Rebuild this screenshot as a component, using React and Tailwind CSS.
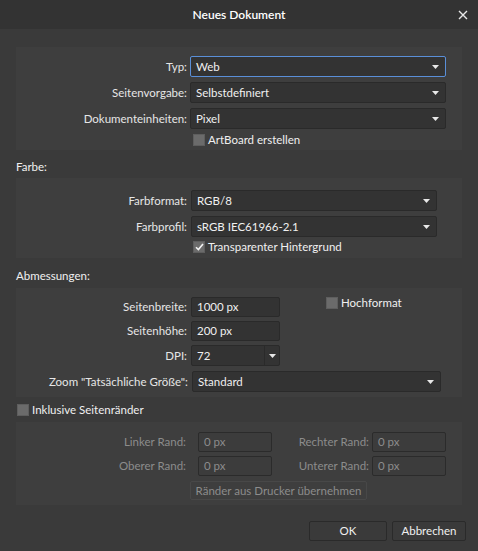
import React from 'react';

const font = { fontFamily: 'Lato, "Liberation Sans", sans-serif' };

function Arrow() {
  return (
    <svg width="7" height="4" viewBox="0 0 7 4" className="shrink-0">
      <path d="M0 0 H7 L3.5 4 Z" fill="#e8e8e8" />
    </svg>
  );
}

function Select({ value, width, focused }) {
  return (
    <div
      className={`flex items-center justify-between h-[21px] pl-[5px] pr-[6px] rounded-[2px] bg-[#333333] border ${
        focused ? 'border-[#5a8fd8]' : 'border-[#2a2a2a]'
      } ${width}`}
    >
      <span className="text-[#f0f0f0]">{value}</span>
      <Arrow />
    </div>
  );
}

function Input({ value, disabled, width = 'w-[89px]' }) {
  return (
    <div
      className={`flex items-center h-[20px] pl-[5px] rounded-[2px] border ${width} ${
        disabled ? 'bg-[#3c3c3c] border-[#2b2b2b] text-[#8c8c8c]' : 'bg-[#333333] border-[#2a2a2a] text-[#f0f0f0]'
      }`}
    >
      {value}
    </div>
  );
}

function Check({ label, checked }) {
  return (
    <div className="flex items-center gap-[3px] h-[12px]">
      <div className="w-[12px] h-[12px] bg-[#6b6b6b] border border-[#5e5e5e] flex items-center justify-center">
        {checked && (
          <svg width="9" height="8" viewBox="0 0 9 8">
            <path d="M1 4.2 L3.4 6.6 L8 1" stroke="#f2f2f2" strokeWidth="1.6" fill="none" />
          </svg>
        )}
      </div>
      <span className="text-[#f0f0f0]">{label}</span>
    </div>
  );
}

function Label({ children, width = 'w-[171px]', disabled }) {
  return (
    <div className={`${width} shrink-0 text-right whitespace-nowrap ${disabled ? 'text-[#8c8c8c]' : 'text-[#e6e6e6]'}`}>
      {children}
    </div>
  );
}

function Panel({ className, children }) {
  return <div className={`mx-4 bg-[#3e3e3e] flex flex-col ${className}`}>{children}</div>;
}

function Heading({ children, className }) {
  return <div className={`${className} px-4 text-[#f0f0f0]`}>{children}</div>;
}

export default function App() {
  return (
    <div className="w-[478px] h-[551px] bg-[#3a3a3a] flex flex-col text-[11.5px] leading-[14px] overflow-hidden" style={font}>
      <div className="h-[29px] bg-[#333333] relative flex items-center justify-center shrink-0">
        <span className="text-white text-[12px] font-semibold">Neues Dokument</span>
        <svg width="10" height="10" viewBox="0 0 10 10" className="absolute right-[10px] top-[10px]">
          <path d="M1 1 L9 9 M9 1 L1 9" stroke="#e8e8e8" strokeWidth="1.4" />
        </svg>
      </div>

      <Panel className="mt-[18px] pt-[9px] pb-[4px] gap-[5px]">
        <div className="flex items-center">
          <Label>Typ:</Label>
          <div className="ml-[3px]"><Select value="Web" width="w-[256px]" focused /></div>
        </div>
        <div className="flex items-center">
          <Label>Seitenvorgabe:</Label>
          <div className="ml-[3px]"><Select value="Selbstdefiniert" width="w-[256px]" /></div>
        </div>
        <div className="flex items-center">
          <Label>Dokumenteinheiten:</Label>
          <div className="ml-[3px]"><Select value="Pixel" width="w-[256px]" /></div>
        </div>
        <div className="ml-[177px]"><Check label="ArtBoard erstellen" /></div>
      </Panel>

      <Heading className="h-[28px] pt-[10px]">Farbe:</Heading>

      <Panel className="pt-[12px] pb-[5px] gap-[5px]">
        <div className="flex items-center">
          <Label>Farbformat:</Label>
          <div className="ml-[4px]"><Select value="RGB/8" width="w-[246px]" /></div>
        </div>
        <div className="flex items-center">
          <Label>Farbprofil:</Label>
          <div className="ml-[4px]"><Select value="sRGB IEC61966-2.1" width="w-[246px]" /></div>
        </div>
        <div className="ml-[177px] mt-[-1px]"><Check label="Transparenter Hintergrund" checked /></div>
      </Panel>

      <Heading className="h-[30px] pt-[11px]">Abmessungen:</Heading>

      <Panel className="pt-[9px] pb-[5px] gap-[4px]">
        <div className="flex items-center">
          <Label>Seitenbreite:</Label>
          <div className="ml-[4px]"><Input value="1000 px" /></div>
          <div className="ml-[46px] -mt-[8px]"><Check label="Hochformat" /></div>
        </div>
        <div className="flex items-center">
          <Label>Seitenhöhe:</Label>
          <div className="ml-[4px]"><Input value="200 px" /></div>
        </div>
        <div className="flex items-center">
          <Label>DPI:</Label>
          <div className="ml-[4px] flex h-[21px] w-[89px] rounded-[2px] bg-[#333333] border border-[#2a2a2a]">
            <div className="flex-1 flex items-center pl-[5px] text-[#f0f0f0]">72</div>
            <div className="w-[15px] border-l border-[#2a2a2a] flex items-center justify-center"><Arrow /></div>
          </div>
        </div>
        <div className="flex items-center mt-[1px]">
          <Label width="w-[172px]">Zoom "Tatsächliche Größe":</Label>
          <div className="ml-[4px]"><Select value="Standard" width="w-[249px]" /></div>
        </div>
      </Panel>

      <div className="h-[25px] flex items-center px-[17px]"><Check label="Inklusive Seitenränder" /></div>

      <Panel className="pt-[10px] pb-[5px] gap-[4px]">
        <div className="flex items-center">
          <Label width="w-[170px]" disabled>Linker Rand:</Label>
          <div className="ml-[12px]"><Input value="0 px" disabled width="w-[74px]" /></div>
          <Label width="w-[97px]" disabled>Rechter Rand:</Label>
          <div className="ml-[3px]"><Input value="0 px" disabled width="w-[74px]" /></div>
        </div>
        <div className="flex items-center">
          <Label width="w-[170px]" disabled>Oberer Rand:</Label>
          <div className="ml-[12px]"><Input value="0 px" disabled width="w-[74px]" /></div>
          <Label width="w-[97px]" disabled>Unterer Rand:</Label>
          <div className="ml-[3px]"><Input value="0 px" disabled width="w-[74px]" /></div>
        </div>
        <div className="ml-[174px] mt-[1px] w-[177px] h-[19px] flex items-center justify-center whitespace-nowrap border border-[#484848] bg-[#3e3e3e] text-[#8c8c8c] rounded-[2px]">
          Ränder aus Drucker übernehmen
        </div>
      </Panel>

      <div className="flex justify-end gap-[5px] pr-[12px] mt-[16px]">
        <button className="w-[78px] h-[20px] bg-[#3a3a3a] border border-[#2a2a2a] rounded-[2px] text-[#f0f0f0]">OK</button>
        <button className="w-[74px] h-[20px] bg-[#3a3a3a] border border-[#2a2a2a] rounded-[2px] text-[#f0f0f0]">Abbrechen</button>
      </div>
    </div>
  );
}
